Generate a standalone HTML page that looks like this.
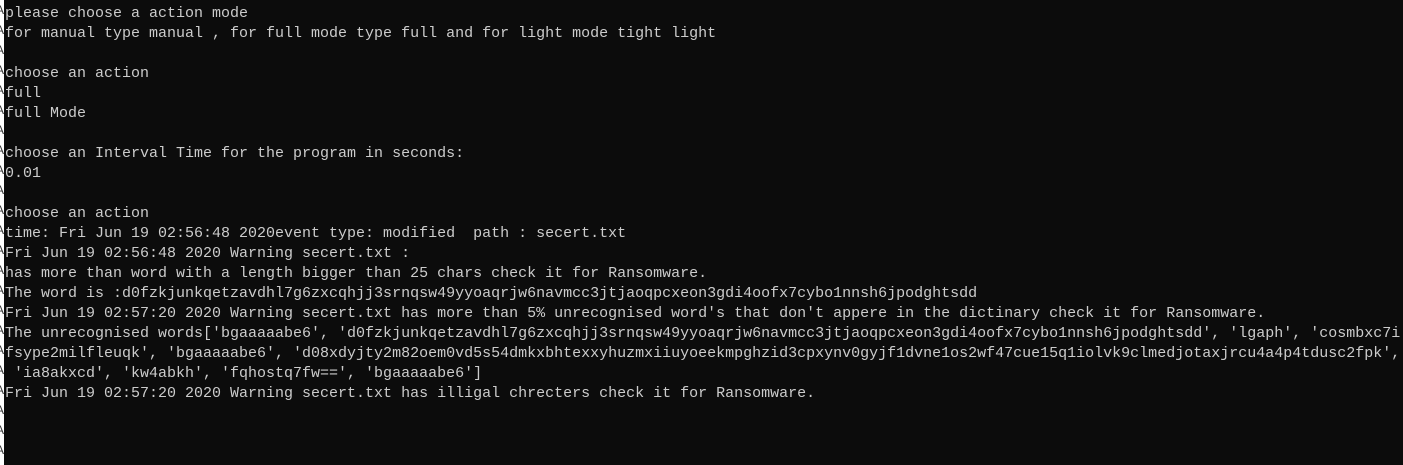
<!DOCTYPE html>
<html><head><style>
html,body{margin:0;padding:0;width:1403px;height:465px;overflow:hidden;background:#0c0c0c;}
#strip{position:absolute;left:0;top:0;width:4px;height:465px;background:#fff;overflow:hidden;}
#strip div{height:20px;font:12px "Liberation Sans",sans-serif;color:#333;margin-left:-4px;line-height:20px;}
#con{position:absolute;left:5px;top:4px;margin:0;font-family:"Liberation Mono",monospace;font-size:15px;line-height:20px;color:#cccccc;white-space:pre;}
</style></head><body>
<div id="strip"><div>A</div><div>A</div><div>A</div><div>A</div><div>A</div><div>A</div><div>A</div><div>A</div><div>A</div><div>A</div><div>A</div><div>A</div><div>A</div><div>A</div><div>A</div><div>A</div><div>A</div><div>A</div><div>A</div><div>A</div><div>A</div><div>A</div><div>A</div></div>
<pre id="con">please choose a action mode
for manual type manual , for full mode type full and for light mode tight light

choose an action
full
full Mode

choose an Interval Time for the program in seconds:
0.01

choose an action
time: Fri Jun 19 02:56:48 2020event type: modified  path : secert.txt
Fri Jun 19 02:56:48 2020 Warning secert.txt :
has more than word with a length bigger than 25 chars check it for Ransomware.
The word is :d0fzkjunkqetzavdhl7g6zxcqhjj3srnqsw49yyoaqrjw6navmcc3jtjaoqpcxeon3gdi4oofx7cybo1nnsh6jpodghtsdd
Fri Jun 19 02:57:20 2020 Warning secert.txt has more than 5% unrecognised word's that don't appere in the dictinary check it for Ransomware.
The unrecognised words['bgaaaaabe6', 'd0fzkjunkqetzavdhl7g6zxcqhjj3srnqsw49yyoaqrjw6navmcc3jtjaoqpcxeon3gdi4oofx7cybo1nnsh6jpodghtsdd', 'lgaph', 'cosmbxc7i
fsype2milfleuqk', 'bgaaaaabe6', 'd08xdyjty2m82oem0vd5s54dmkxbhtexxyhuzmxiiuyoeekmpghzid3cpxynv0gyjf1dvne1os2wf47cue15q1iolvk9clmedjotaxjrcu4a4p4tdusc2fpk',
 'ia8akxcd', 'kw4abkh', 'fqhostq7fw==', 'bgaaaaabe6']
Fri Jun 19 02:57:20 2020 Warning secert.txt has illigal chrecters check it for Ransomware.</pre>
</body></html>
